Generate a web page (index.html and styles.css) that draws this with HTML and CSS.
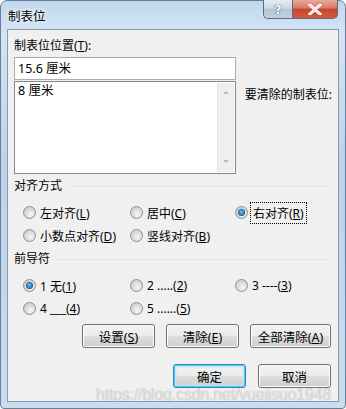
FILE: index.html
```html
<!DOCTYPE html>
<html lang="zh-CN">
<head>
<meta charset="UTF-8" />
<title>制表位</title>
<link rel="stylesheet" href="styles.css">
</head>
<body>
<div class="window">
  <div class="titlebar">
    <span class="title">制表位</span>
    <div class="caption-btns">
      <span class="cap help">?</span>
      <span class="cap close">
        <svg width="14" height="11" viewBox="0 0 14 11"><path d="M2 1 L12 10 M12 1 L2 10" stroke="#fff" stroke-width="3" stroke-linecap="square"/><path d="M2 1 L12 10 M12 1 L2 10" stroke="#7a3a30" stroke-width="0.6" fill="none" opacity="0.4"/></svg>
      </span>
    </div>
  </div>

  <div class="client">
    <div class="label">制表位位置(<u>T</u>):</div>
    <div class="stops">
      <div class="stop-col">
        <div class="textbox">15.6 厘米</div>
        <div class="listbox">
          <div class="items">8 厘米</div>
          <div class="scrollbar">
            <span class="arrow up"></span>
            <span class="arrow down"></span>
          </div>
        </div>
      </div>
      <div class="clear-label">要清除的制表位:</div>
    </div>

    <div class="group">对齐方式</div>
    <div class="radios">
      <label class="radio"><span class="dot"></span><span>左对齐(<u>L</u>)</span></label>
      <label class="radio"><span class="dot"></span><span>居中(<u>C</u>)</span></label>
      <label class="radio"><span class="dot on"></span><span class="focus">右对齐(<u>R</u>)</span></label>
      <label class="radio"><span class="dot"></span><span>小数点对齐(<u>D</u>)</span></label>
      <label class="radio"><span class="dot"></span><span>竖线对齐(<u>B</u>)</span></label>
    </div>

    <div class="group">前导符</div>
    <div class="radios">
      <label class="radio"><span class="dot on"></span><span>1 无(<u>1</u>)</span></label>
      <label class="radio"><span class="dot"></span><span>2 .....(<u>2</u>)</span></label>
      <label class="radio"><span class="dot"></span><span>3 ----(<u>3</u>)</span></label>
      <label class="radio"><span class="dot"></span><span>4 ___(<u>4</u>)</span></label>
      <label class="radio"><span class="dot"></span><span>5 ......(<u>5</u>)</span></label>
    </div>

    <div class="actions">
      <button class="btn">设置(<u>S</u>)</button>
      <button class="btn">清除(<u>E</u>)</button>
      <button class="btn wide">全部清除(<u>A</u>)</button>
    </div>
    <div class="actions bottom">
      <button class="btn default">确定</button>
      <button class="btn">取消</button>
    </div>

    <div class="watermark">https://blog.csdn.net/yuejisuo1948</div>
  </div>
</div>
</body>
</html>
```

FILE: styles.css
```css
body {
  margin: 0;
  background: #fff;
  font-family: "Noto Sans", "Noto Sans CJK SC", sans-serif;
  font-size: 12px;
  color: #000;
}
u {
  text-decoration: underline;
  text-underline-offset: 1px;
}
.window {
  width: 346px;
  height: 409px;
  box-sizing: border-box;
  border: 1px solid #6d7e91;
  border-radius: 7px 7px 4px 4px;
  background: linear-gradient(180deg, #c2d8ee 0%, #d3e4f5 8%, #bcd3ec 40%, #c9dcf1 100%);
  padding: 0 6px 6px;
  display: flex;
  flex-direction: column;
}
.titlebar {
  height: 28px;
  display: flex;
  align-items: flex-start;
  justify-content: space-between;
}
.title {
  margin: 5px 0 0 1px;
  font-size: 12.5px;
  color: #000;
  text-shadow: 0 0 6px #fff, 0 0 3px #fff;
}
.caption-btns {
  display: flex;
  margin-top: -1px;
  margin-right: 1px;
}
.cap {
  height: 19px;
  box-sizing: border-box;
  border: 1px solid #5d6b7a;
  border-top: none;
  display: flex;
  align-items: center;
  justify-content: center;
}
.help {
  width: 29px;
  border-right: none;
  border-radius: 0 0 0 5px;
  background: linear-gradient(180deg, #e4ecf4 0%, #cdd9e6 45%, #b3c4d6 50%, #c2d2e2 100%);
  color: #fff;
  font-family: "DejaVu Sans", sans-serif;
  font-weight: bold;
  font-size: 13px;
  text-shadow: 0 0 1px #3c4a58, 0 0 1px #3c4a58;
}
.close {
  width: 46px;
  border-radius: 0 0 5px 0;
  background: linear-gradient(180deg, #e8a89c 0%, #d77a68 45%, #c74530 50%, #d25a42 100%);
}
.client {
  flex: 1;
  position: relative;
  overflow: hidden;
  background: #f0f0f0;
  border: 1px solid #8b9aab;
  padding: 8px 6px 0 6px;
}
.label {
  height: 16px;
  line-height: 16px;
}
.stops {
  display: flex;
  margin-top: 3px;
}
.stop-col {
  width: 222px;
}
.textbox {
  height: 23px;
  box-sizing: border-box;
  border: 1px solid #abadb3;
  background: #fff;
  padding: 0 3px;
  line-height: 21px;
  font-size: 12.5px;
}
.listbox {
  margin-top: 1px;
  height: 93px;
  box-sizing: border-box;
  border: 1px solid #828790;
  background: #fff;
  display: flex;
}
.items {
  flex: 1;
  padding: 1px 3px;
  line-height: 15px;
  font-size: 12.5px;
}
.scrollbar {
  width: 17px;
  margin: 1px 1px 1px 0;
  background: #efefef;
  border-left: 1px solid #e6e6e6;
  display: flex;
  flex-direction: column;
  justify-content: space-between;
  align-items: center;
  padding: 8px 0 9px;
  box-sizing: border-box;
}
.arrow {
  width: 0;
  height: 0;
  border-left: 3px solid transparent;
  border-right: 3px solid transparent;
}
.arrow.up {
  border-bottom: 3px solid #b9b9b9;
}
.arrow.down {
  border-top: 3px solid #b9b9b9;
}
.clear-label {
  margin: 30px 0 0 9px;
  white-space: nowrap;
  line-height: 16px;
}
.group {
  margin-top: 4px;
  height: 16px;
  line-height: 16px;
  display: flex;
  align-items: center;
  gap: 6px;
}
.group::after {
  content: "";
  flex: 1;
  height: 1px;
  background: #dde6ef;
}
.radios {
  display: grid;
  grid-template-columns: 107px 105px auto;
  grid-auto-rows: 23px;
  margin: 7px 0 4px 9px;
}
.radio {
  display: flex;
  align-items: center;
  gap: 4px;
  white-space: nowrap;
}
.dot {
  width: 13px;
  height: 13px;
  box-sizing: border-box;
  border-radius: 50%;
  border: 1px solid #8f8f8f;
  background: radial-gradient(circle at 60% 65%, #f6f6f6 0%, #d8d8d8 55%, #c8c8c8 100%);
  flex: none;
  position: relative;
}
.dot.on::after {
  content: "";
  position: absolute;
  left: 3px;
  top: 3px;
  width: 5px;
  height: 5px;
  border-radius: 50%;
  background: radial-gradient(circle at 45% 40%, #8fd3f8 0%, #2a8bcb 45%, #0a4f88 100%);
  box-shadow: 0 0 0 1px #1d5f93;
}
.focus {
  outline: 1px dotted #000;
  outline-offset: 1px;
  padding: 0 1px;
}
.actions {
  display: flex;
  justify-content: flex-end;
  gap: 11px;
  margin: 3px 1px 0 0;
}
.actions.bottom {
  margin-top: 16px;
  gap: 12px;
}
.btn {
  width: 73px;
  height: 24px;
  box-sizing: border-box;
  border: 1px solid #707070;
  border-radius: 3px;
  background: linear-gradient(180deg, #f3f3f3 0%, #ebebeb 48%, #dddddd 52%, #cfcfcf 100%);
  box-shadow: inset 0 0 0 1px #fcfcfc;
  font-family: inherit;
  font-size: 12.5px;
  color: #000;
  padding: 0;
}
.btn.wide {
  width: 81px;
}
.btn.default {
  border-color: #3c7fb1;
  box-shadow: inset 0 0 0 1px #48d1fc, inset 0 0 2px 2px #b4e6f9;
}
.watermark {
  position: absolute;
  left: 88px;
  top: 356px;
  font-family: "Liberation Sans", Arial, sans-serif;
  font-size: 16px;
  letter-spacing: -0.2px;
  line-height: 18px;
  color: rgba(255, 255, 255, 0.55);
  text-shadow: 0 0 1px rgba(110, 110, 110, 0.55);
  white-space: nowrap;
  pointer-events: none;
}
```
